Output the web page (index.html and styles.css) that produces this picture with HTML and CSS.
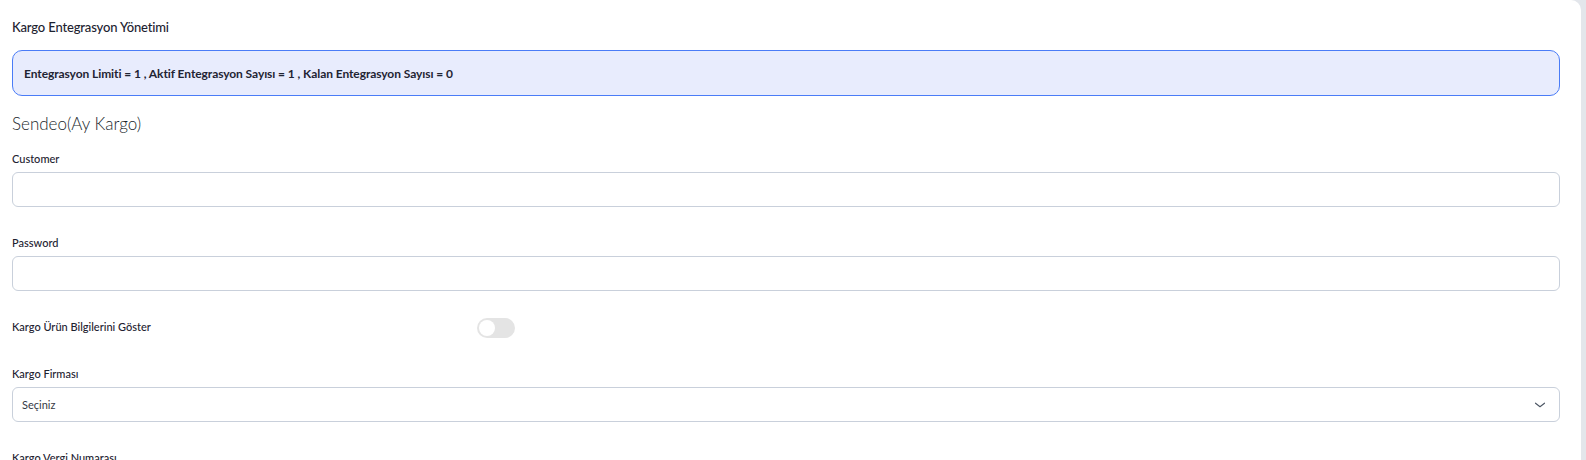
FILE: index.html
```html
<!DOCTYPE html>
<html lang="tr">
<head>
  <meta charset="UTF-8">
  <meta name="viewport" content="width=device-width, initial-scale=1.0">
  <title>Kargo Entegrasyon Yönetimi</title>
  <link rel="stylesheet" href="styles.css">
</head>
<body>
  <div class="card">
    <h4 class="card-title">Kargo Entegrasyon Yönetimi</h4>

    <div class="alert">
      Entegrasyon Limiti = 1 , Aktif Entegrasyon Sayısı = 1 , Kalan Entegrasyon Sayısı = 0
    </div>

    <h3 class="provider">Sendeo(Ay Kargo)</h3>

    <div class="form-group">
      <label class="form-label">Customer</label>
      <input class="form-control" type="text">
    </div>

    <div class="form-group">
      <label class="form-label">Password</label>
      <input class="form-control" type="password">
    </div>

    <div class="form-group switch-row">
      <label class="form-label">Kargo Ürün Bilgilerini Göster</label>
      <span class="switch"><span class="knob"></span></span>
    </div>

    <div class="form-group">
      <label class="form-label">Kargo Firması</label>
      <div class="form-select">
        <span>Seçiniz</span>
        <svg width="12" height="8" viewBox="0 0 12 8"><path d="M1.5 2.2l4.5 3.6 4.5-3.6" fill="none" stroke="#4b5563" stroke-width="1.1" stroke-linecap="round" stroke-linejoin="round"/></svg>
      </div>
    </div>

    <div class="form-group">
      <label class="form-label">Kargo Vergi Numarası</label>
      <input class="form-control" type="text">
    </div>
  </div>
</body>
</html>
```

FILE: styles.css
```css
body {
  margin: 0;
  background: #e3e6eb;
  font-family: Lato, "Noto Sans", sans-serif;
  color: #1f2430;
}

.card {
  width: 1581px;
  box-sizing: border-box;
  background: #fff;
  border-radius: 0 10px 10px 0;
  padding: 17px 21px 20px 12px;
  min-height: 600px;
}

.card-title {
  margin: 0 0 13px;
  font-size: 13px;
  font-weight: 500;
  line-height: 20px;
  letter-spacing: -0.15px;
  color: #1d2230;
}

.alert {
  height: 46px;
  box-sizing: border-box;
  display: flex;
  align-items: center;
  padding: 0 11px;
  background: #e8ecfd;
  border: 1px solid #4a7cf7;
  border-radius: 10px;
  font-size: 12px;
  font-weight: 700;
  letter-spacing: -0.08px;
  color: #1f2433;
}

.provider {
  margin: 17px 0 15px;
  font-size: 17px;
  font-weight: 300;
  line-height: 22px;
  color: #1a1f2b;
}

.form-group {
  margin-bottom: 27px;
}

.form-label {
  display: block;
  font-size: 11px;
  font-weight: 500;
  line-height: 18px;
  margin-bottom: 4px;
  color: #1d2230;
}

.form-control,
.form-select {
  display: block;
  width: 100%;
  height: 35px;
  box-sizing: border-box;
  border: 1px solid #c9d0db;
  border-radius: 6px;
  background: #fff;
  font: inherit;
  font-size: 11px;
  padding: 0 9px;
  outline: none;
}

.form-select {
  display: flex;
  align-items: center;
  justify-content: space-between;
  padding-right: 13px;
  color: #353a45;
}

.switch-row {
  display: grid;
  grid-template-columns: 465px auto;
  align-items: center;
  justify-content: start;
}

.switch-row .form-label {
  margin: 0 0 2px;
}

.switch {
  width: 38px;
  height: 20px;
  border-radius: 10px;
  background: #e4e4e4;
  display: flex;
  align-items: center;
  padding: 0 2px;
  box-sizing: border-box;
}

.knob {
  width: 16px;
  height: 16px;
  border-radius: 50%;
  background: #fff;
}
```
